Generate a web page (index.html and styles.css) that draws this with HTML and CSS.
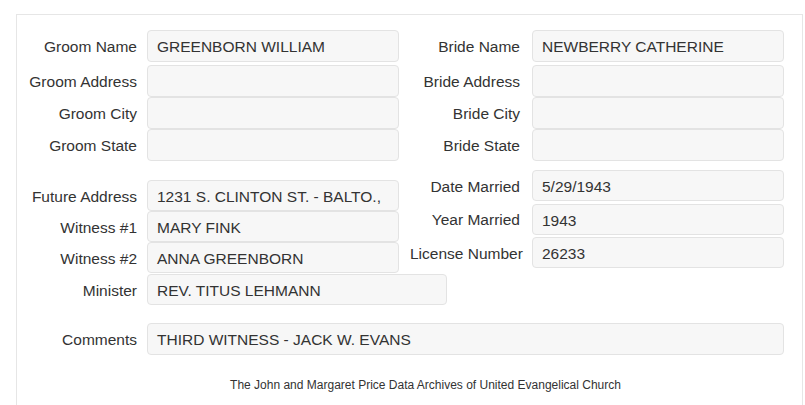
FILE: index.html
```html
<!DOCTYPE html>
<html lang="en">

<head>
    <meta charset="UTF-8">
    <meta name="viewport" content="width=device-width, initial-scale=1.0">
    <title>Marriage Record</title>
    <link rel="stylesheet" href="styles.css">
</head>

<body>
    <div class="record">
        <!-- names and addresses -->
        <div class="section top">
            <div class="half left">
                <div class="row first">
                    <label>Groom Name</label>
                    <div class="field">GREENBORN WILLIAM</div>
                </div>
                <div class="row">
                    <label>Groom Address</label>
                    <div class="field"></div>
                </div>
                <div class="row">
                    <label>Groom City</label>
                    <div class="field"></div>
                </div>
                <div class="row">
                    <label>Groom State</label>
                    <div class="field"></div>
                </div>
            </div>
            <div class="half right">
                <div class="row first">
                    <label>Bride Name</label>
                    <div class="field">NEWBERRY CATHERINE</div>
                </div>
                <div class="row">
                    <label>Bride Address</label>
                    <div class="field"></div>
                </div>
                <div class="row">
                    <label>Bride City</label>
                    <div class="field"></div>
                </div>
                <div class="row">
                    <label>Bride State</label>
                    <div class="field"></div>
                </div>
            </div>
        </div>

        <!-- wedding details -->
        <div class="section details">
            <div class="half left">
                <div class="row">
                    <label>Future Address</label>
                    <div class="field">1231 S. CLINTON ST. - BALTO.,</div>
                </div>
                <div class="row">
                    <label>Witness #1</label>
                    <div class="field">MARY FINK</div>
                </div>
                <div class="row">
                    <label>Witness #2</label>
                    <div class="field">ANNA GREENBORN</div>
                </div>
                <div class="row minister">
                    <label>Minister</label>
                    <div class="field wide">REV. TITUS LEHMANN</div>
                </div>
            </div>
            <div class="half right">
                <div class="row">
                    <label>Date Married</label>
                    <div class="field">5/29/1943</div>
                </div>
                <div class="row">
                    <label>Year Married</label>
                    <div class="field">1943</div>
                </div>
                <div class="row">
                    <label>License Number</label>
                    <div class="field">26233</div>
                </div>
            </div>
        </div>

        <div class="row comments">
            <label>Comments</label>
            <div class="field full">THIRD WITNESS - JACK W. EVANS</div>
        </div>

        <p class="footer">The John and Margaret Price Data Archives of United Evangelical Church</p>
    </div>
</body>

</html>
```

FILE: styles.css
```css
body {
    margin: 0;
    font-family: "Liberation Sans", Arial, Helvetica, sans-serif;
    font-size: 15.5px;
    color: #333;
    background-color: #fff;
}

/* outer panel */
.record {
    margin: 14px 2px 0 16px;
    padding: 15px 0 40px 0;
    border: 1px solid #e6e6e6;
}

.section {
    display: flex;
}

.half {
    display: flex;
    flex-direction: column;
}

.half.left {
    width: 383px;
    flex-shrink: 0;
}

.row {
    display: flex;
    align-items: center;
}

.row label {
    flex-shrink: 0;
    width: 120px;
    margin-right: 10px;
    padding-top: 2px;
    text-align: right;
    white-space: nowrap;
}

.half.right .row label {
    width: 110px;
    margin-left: 10px;
    margin-right: 12px;
}

/* the read-only value boxes */
.field {
    flex-shrink: 0;
    box-sizing: border-box;
    width: 252px;
    height: 32px;
    padding: 1px 9px 0 9px;
    line-height: 30px;
    background-color: #f7f7f7;
    border: 1px solid #e3e3e3;
    border-radius: 4px;
    white-space: nowrap;
    overflow: hidden;
}

.field.wide {
    width: 300px;
}

.field.full {
    width: 637px;
}

.top .row.first {
    margin-bottom: 3px;
}

.details {
    margin-top: 9px;
}

.details .half.left {
    padding-top: 10px;
}

.details .field {
    height: 31px;
    line-height: 29px;
}

.details .half.right {
    gap: 2.5px;
}

.row.minister {
    margin-top: 1px;
}

.comments {
    margin-top: 18px;
}

.footer {
    margin: 21px 0 0 0;
    padding-left: 32px;
    font-size: 12px;
    line-height: 18px;
    text-align: center;
}
```
